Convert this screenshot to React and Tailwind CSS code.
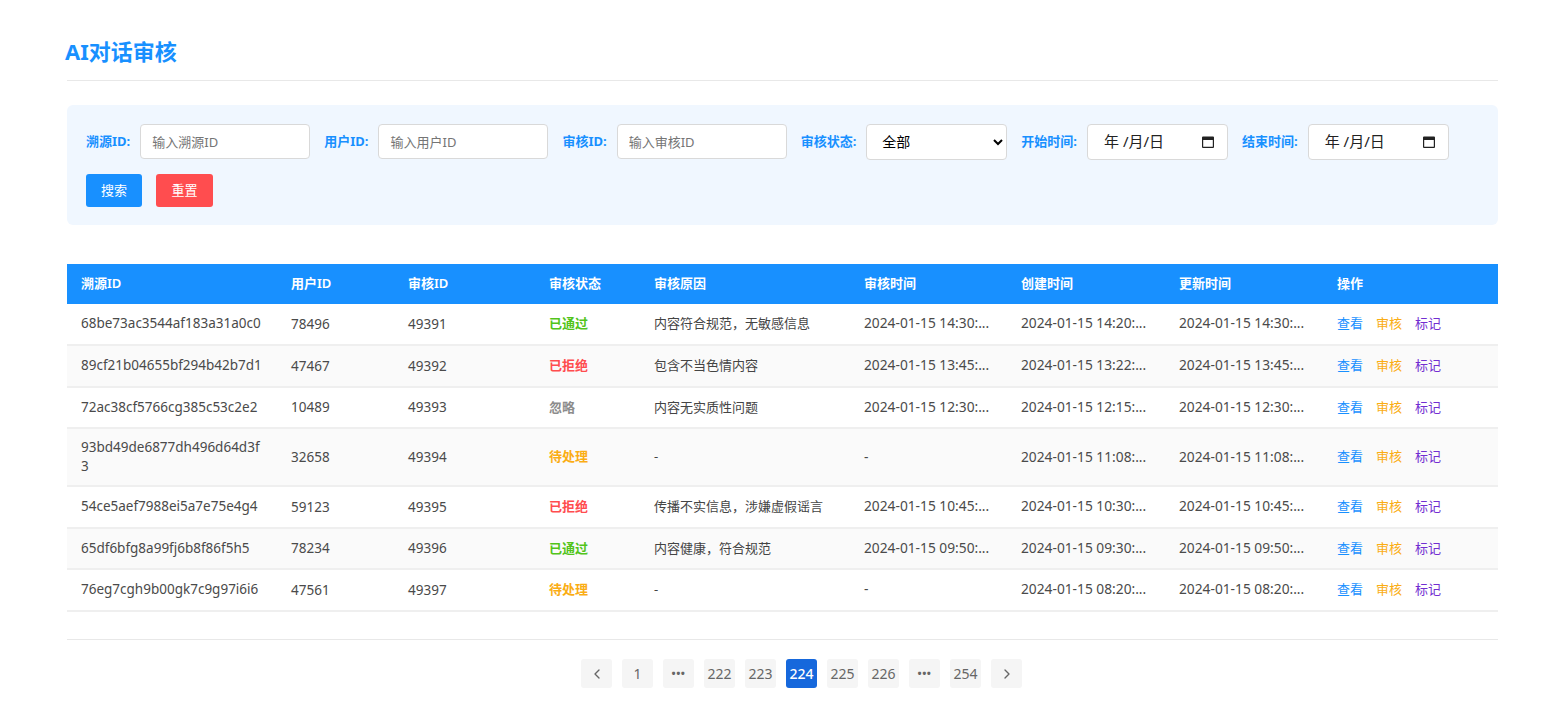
import React from "react";
import { ChevronLeft, ChevronRight } from "lucide-react";

const rows = [
  { trace: "68be73ac3544af183a31a0c0", user: "78496", audit: "49391", status: "已通过", reason: "内容符合规范，无敏感信息", auditAt: "2024-01-15 14:30:...", created: "2024-01-15 14:20:...", updated: "2024-01-15 14:30:..." },
  { trace: "89cf21b04655bf294b42b7d1", user: "47467", audit: "49392", status: "已拒绝", reason: "包含不当色情内容", auditAt: "2024-01-15 13:45:...", created: "2024-01-15 13:22:...", updated: "2024-01-15 13:45:..." },
  { trace: "72ac38cf5766cg385c53c2e2", user: "10489", audit: "49393", status: "忽略", reason: "内容无实质性问题", auditAt: "2024-01-15 12:30:...", created: "2024-01-15 12:15:...", updated: "2024-01-15 12:30:..." },
  { trace: "93bd49de6877dh496d64d3f3", user: "32658", audit: "49394", status: "待处理", reason: "-", auditAt: "-", created: "2024-01-15 11:08:...", updated: "2024-01-15 11:08:..." },
  { trace: "54ce5aef7988ei5a7e75e4g4", user: "59123", audit: "49395", status: "已拒绝", reason: "传播不实信息，涉嫌虚假谣言", auditAt: "2024-01-15 10:45:...", created: "2024-01-15 10:30:...", updated: "2024-01-15 10:45:..." },
  { trace: "65df6bfg8a99fj6b8f86f5h5", user: "78234", audit: "49396", status: "已通过", reason: "内容健康，符合规范", auditAt: "2024-01-15 09:50:...", created: "2024-01-15 09:30:...", updated: "2024-01-15 09:50:..." },
  { trace: "76eg7cgh9b00gk7c9g97i6i6", user: "47561", audit: "49397", status: "待处理", reason: "-", auditAt: "-", created: "2024-01-15 08:20:...", updated: "2024-01-15 08:20:..." },
];

const statusColor = {
  "已通过": "text-[#52c41a]",
  "已拒绝": "text-[#ff4d4f]",
  "忽略": "text-[#8c8c8c]",
  "待处理": "text-[#faad14]",
};

const headers = ["溯源ID", "用户ID", "审核ID", "审核状态", "审核原因", "审核时间", "创建时间", "更新时间", "操作"];
const pages = ["1", "dots", "222", "223", "224", "225", "226", "dots", "254"];

function Label({ children }) {
  return <label className="text-[13px] font-bold text-[#1890ff] whitespace-nowrap mr-[10px]">{children}</label>;
}

function TextField({ label, placeholder }) {
  return (
    <div className="flex items-center mr-[14px]">
      <Label>{label}</Label>
      <input
        placeholder={placeholder}
        className="w-[170px] h-[35px] px-[11px] text-[13px] bg-white border border-[#d9d9d9] rounded-[4px] placeholder:text-[#757575]"
      />
    </div>
  );
}

function DateField({ label }) {
  return (
    <div className="flex items-center mr-[14px]">
      <Label>{label}</Label>
      <div className="w-[141px] h-[36px] pl-[16px] pr-[13px] flex items-center justify-between text-[15px] text-[#222] bg-white border border-[#d9d9d9] rounded-[4px]">
        <span>年 /月/日</span>
        <svg width="12" height="13" viewBox="0 0 12 13" className="text-[#222]">
          <path fill="currentColor" d="M1 1.5h10a1 1 0 0 1 1 1V12a1 1 0 0 1-1 1H1a1 1 0 0 1-1-1V2.5a1 1 0 0 1 1-1zm.2 3.5v6.8h9.6V5z" />
        </svg>
      </div>
    </div>
  );
}

function PageBtn({ active, children }) {
  return (
    <button
      className={
        "w-[31px] h-[29px] flex items-center justify-center rounded-[3px] text-[14px] " +
        (active ? "bg-[#1668dc] text-white font-medium" : "bg-[#f5f5f5] text-[#666]")
      }
    >
      {children}
    </button>
  );
}

export default function App() {
  return (
    <div className="min-h-screen bg-white pl-[67px] pr-[61px] pt-[36px] font-['Noto_Sans','Noto_Sans_CJK_SC',sans-serif] text-[13px] text-[#333]">
      <h1 className="text-[22px] leading-[30px] font-bold text-[#1890ff] pb-[14px] border-b border-[#e8e8e8]">
        <span className="block -ml-[2px]">AI对话审核</span>
      </h1>

      <div className="mt-[24px] h-[120px] bg-[#f0f7ff] rounded-[6px] pl-[19px] pr-[18px] pt-[18px]">
        <div className="flex items-center h-[37px]">
          <TextField label="溯源ID:" placeholder="输入溯源ID" />
          <TextField label="用户ID:" placeholder="输入用户ID" />
          <TextField label="审核ID:" placeholder="输入审核ID" />
          <div className="flex items-center mr-[14px]">
            <Label>审核状态:</Label>
            <select className="w-[141px] h-[36px] pl-[11px] text-[14px] text-black bg-white border border-[#d9d9d9] rounded-[4px]">
              <option>全部</option>
            </select>
          </div>
          <DateField label="开始时间:" />
          <DateField label="结束时间:" />
        </div>
        <div className="flex gap-[14px] mt-[14px]">
          <button className="w-[56px] h-[33px] rounded-[3px] bg-[#1890ff] text-white text-[13px]">搜索</button>
          <button className="w-[57px] h-[33px] rounded-[3px] bg-[#ff4d4f] text-white text-[13px]">重置</button>
        </div>
      </div>

      <table className="mt-[39px] w-[1431px] table-fixed border-collapse">
        <colgroup>
          <col className="w-[210px]" />
          <col className="w-[117px]" />
          <col className="w-[141px]" />
          <col className="w-[105px]" />
          <col className="w-[210px]" />
          <col className="w-[157px]" />
          <col className="w-[158px]" />
          <col className="w-[158px]" />
          <col className="w-[175px]" />
        </colgroup>
        <thead>
          <tr className="bg-[#1890ff] text-white h-[39.5px]">
            {headers.map((h) => (
              <th key={h} className="px-[14px] text-left text-[13px] font-semibold">{h}</th>
            ))}
          </tr>
        </thead>
        <tbody>
          {rows.map((r, i) => (
            <tr key={r.audit} className={"border-b-2 border-[#efefef] " + (i === 3 ? "h-[58px] " : "h-[41.5px] ") + (i % 2 === 1 ? "bg-[#fafafa]" : "bg-white")}>
              <td className="px-[14px] text-[13.5px] text-[#4a4a4a] leading-[19px] break-all">{r.trace}</td>
              <td className="px-[14px] text-[13.5px] text-[#4a4a4a]">{r.user}</td>
              <td className="px-[14px] text-[13.5px] text-[#4a4a4a]">{r.audit}</td>
              <td className={"px-[14px] font-semibold " + statusColor[r.status]}>{r.status}</td>
              <td className="px-[14px] text-[#444]">{r.reason}</td>
              <td className="px-[14px] text-[13.75px] text-[#4a4a4a]">{r.auditAt}</td>
              <td className="px-[14px] text-[13.75px] text-[#4a4a4a]">{r.created}</td>
              <td className="px-[14px] text-[13.75px] text-[#4a4a4a]">{r.updated}</td>
              <td className="px-[14px]">
                <span className="text-[#1890ff] mr-[13px]">查看</span>
                <span className="text-[#faad14] mr-[13px]">审核</span>
                <span className="text-[#722ed1]">标记</span>
              </td>
            </tr>
          ))}
        </tbody>
      </table>

      <div className="mt-[27.5px] pt-[19px] pl-[38px] border-t border-[#e8e8e8] w-[1431px] flex justify-center gap-[10px]">
        <PageBtn><ChevronLeft size={16} /></PageBtn>
        {pages.map((p, i) => (
          <PageBtn key={i} active={p === "224"}>
            {p === "dots" ? <span className="font-bold text-[11px] tracking-[0.5px]">•••</span> : p}
          </PageBtn>
        ))}
        <PageBtn><ChevronRight size={16} /></PageBtn>
      </div>
    </div>
  );
}
